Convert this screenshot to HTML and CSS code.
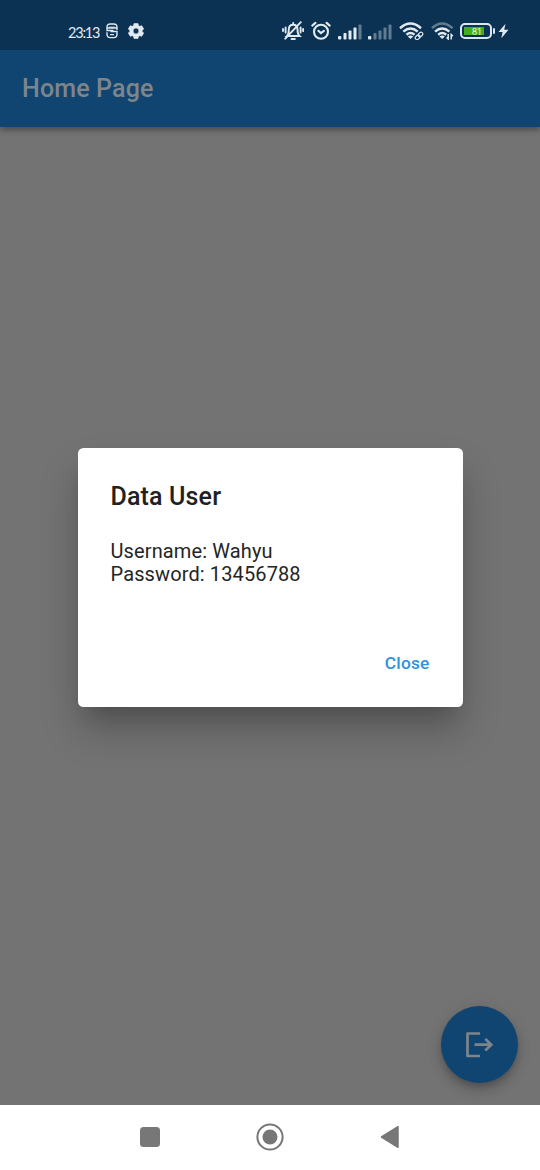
FILE: index.html
```html
<!DOCTYPE html>
<html lang="en">
<head>
<meta charset="utf-8">
<title>Home Page</title>
<link rel="stylesheet" href="styles.css">
</head>
<body>
<div class="screen">
  <header class="status">
    <span class="clock">23:13</span>
    <svg class="i-app" width="12" height="16" viewBox="0 0 12 16" fill="none" stroke="currentColor" stroke-width="1.400"><path d="M11 6.900V4.300C11 2.200 9.800 1 7.700 1H4.300C2.200 1 1 2.200 1 4.300v3.200h6.500M4.500 8.500H11v2.800c0 2.100-1.200 3.300-3.300 3.300H4.300c-2.100 0-3.300-1.200-3.300-3.300V9.200M1.500 5h9M4 3.400v1.600M6 3.400v1.600M8 3.400v1.600M4 11.600h4"/></svg>
    <svg class="i-gear" width="16" height="16" viewBox="0 0 16 16"><path fill="currentColor" stroke="currentColor" stroke-width=".6" stroke-linejoin="round" fill-rule="evenodd" d="M6 .5h4l.5 2.100 1.200.700 2.100-.600 1.900 3.300L14.200 7.400v1.200l1.500 1.400-1.900 3.300-2.100-.600-1.200.700L10 15.500H6l-.5-2.100-1.200-.700-2.100.600L.3 10l1.500-1.400V7.400L.3 6l1.900-3.300 2.100.600 1.200-.700zM8 5.100a2.900 2.900 0 1 0 0 5.800 2.900 2.900 0 0 0 0-5.800z"/></svg>
    <div class="tray">
      <svg class="i-bell" width="22" height="20" viewBox="0 0 22 20" fill="none" stroke="currentColor" stroke-width="1.900" stroke-linecap="round"><path d="M5 15h12.500c-1.700-1.500-2-2.500-2-6.300 0-2.900-1.700-4.900-4.300-4.900S6.800 5.800 6.800 8.700c0 3.800-.2 4.900-1.800 6.300zM11.200 3.500V2M9.500 18h3.400M18.800 1.200 3.300 17.700M3.600 6.500v5M1 8v2M18.600 6.500v5M21.100 8v2"/></svg>
      <svg class="i-alarm" width="20" height="20" viewBox="0 0 20 20" fill="none" stroke="currentColor" stroke-width="2.100" stroke-linecap="round"><circle cx="10" cy="10.800" r="7"/><path d="M1.300 4.600 4.400 1.900M18.700 4.600l-3.100-2.700M7.400 9.800l2.500 2.300 3-2.300"/></svg>
      <svg class="i-signal" width="24" height="16" viewBox="0 0 24 16" fill="currentColor"><rect y="12" width="3.300" height="3.500" rx="1"/><rect x="5.500" y="9" width="3" height="6.500" rx=".8"/><rect x="10.500" y="6.500" width="3" height="9" rx=".8"/><rect x="15.500" y="3.500" width="3" height="12" rx=".8"/><rect class="dim" x="20.500" y=".5" width="3" height="15" rx=".8"/></svg>
      <svg class="i-signal2" width="24" height="16" viewBox="0 0 24 16" fill="currentColor"><rect y="12" width="3.300" height="3.500" rx="1"/><g class="dim"><rect x="5.500" y="9" width="3" height="6.500" rx=".8"/><rect x="10.500" y="6.500" width="3" height="9" rx=".8"/><rect x="15.500" y="3.500" width="3" height="12" rx=".8"/><rect x="20.500" y=".5" width="3" height="15" rx=".8"/></g></svg>
      <svg class="i-wifi" width="26" height="18" viewBox="0 0 26 18" fill="none" stroke="currentColor" stroke-width="2.500"><path d="M1 6.200Q11.500-3.200 22 6.200M4.300 9.600q7.200-6.200 14.400 0M7.500 12.700q4-3.300 8 0"/><path fill="currentColor" stroke="none" d="m11.500 17-2.700-2.600q2.700-1.800 5.400 0z"/><g stroke-width="1.200" transform="rotate(-45 20 14)"><rect x="15.500" y="12.200" width="5.200" height="3.600" rx="1.800"/><rect x="19.500" y="12.200" width="5.200" height="3.600" rx="1.800"/></g></svg>
      <svg class="i-wifi2" width="24" height="18" viewBox="0 0 24 18" fill="none" stroke="currentColor" stroke-width="2.500"><path class="dim" d="M1 6.200q10-9.400 20.500 0"/><path d="M4 9.600q7.200-6.200 14.400 0M7.200 12.700q4-3.300 8 0"/><path fill="currentColor" stroke="none" d="m11.200 17-2.700-2.600q2.700-1.800 5.400 0z"/><path stroke-width="1.500" d="M17.200 12v5l-1.600-1.600M20.200 17.500v-5l1.600 1.600"/></svg>
      <div class="battery"><div class="charge">81</div></div>
      <svg class="i-bolt" width="11" height="16" viewBox="0 0 11 16"><path fill="currentColor" d="M7.500.700.500 9h4.100L3.300 15.300 10.500 6.700H6.200z"/></svg>
    </div>
  </header>
  <div class="appbar">Home Page</div>
  <main class="body">
    <section class="dialog">
      <h2 class="title">Data User</h2>
      <p class="content">Username: Wahyu<br>Password: 13456788</p>
      <button class="close">Close</button>
    </section>
    <div class="fab">
      <svg width="30" height="28" viewBox="0 0 30 28" fill="none" stroke="currentColor" stroke-width="2.700"><path stroke-linejoin="round" d="M15 2.500H2.500v22.500H15"/><path d="M9.500 13.700h17M20.300 7.900l6 5.800-6 5.800"/></svg>
    </div>
  </main>
  <nav class="nav">
    <svg width="20" height="20" viewBox="0 0 20 20"><rect width="20" height="20" rx="3.500" fill="currentColor"/></svg>
    <svg width="28" height="28" viewBox="0 0 28 28"><circle cx="14" cy="14" r="12.600" fill="none" stroke="currentColor" stroke-width="2"/><circle cx="14" cy="14" r="7.500" fill="currentColor"/></svg>
    <svg width="20" height="24" viewBox="0 0 20 24"><path d="M1.500 12 18 1.700v20.600z" fill="currentColor" stroke="currentColor" stroke-width="1.500" stroke-linejoin="round"/></svg>
  </nav>
</div>
</body>
</html>
```
FILE: styles.css
```css
* { box-sizing: border-box; }
body { margin: 0; font-family: Roboto, sans-serif; }
.screen { width: 540px; height: 1170px; display: flex; flex-direction: column; background: #737373; overflow: hidden; }
.status { height: 50px; flex: none; padding: 12px 31px 0 68px; display: flex; align-items: center; background: #0b3252; color: #e1eaf1; position: relative; z-index: 3; }
.status svg { display: block; flex: none; }
.clock { width: 31px; font: 14.500px/20px Lato, sans-serif; letter-spacing: -1.200px; white-space: nowrap; margin-top: 3px; }
.i-app { margin-left: 7px; }
.i-gear { margin-left: 10px; }
.tray { margin-left: auto; display: flex; align-items: center; }
.dim { opacity: .4; }
.i-alarm { margin-left: 7px; }
.i-signal { margin-left: 7px; position: relative; top: 1px; }
.i-signal2 { margin-left: 6px; position: relative; top: 1px; }
.i-wifi { margin-left: 7px; }
.i-wifi2 { margin-left: 6px; }
.battery { width: 32px; height: 16px; margin-left: 5px; padding: 2px; border: 2px solid #dce6ee; border-radius: 5px; position: relative; }
.battery::after { content: ""; position: absolute; right: -5px; top: 3px; width: 2px; height: 6px; background: #dce6ee; border-radius: 1px; }
.charge { width: 20px; height: 8px; background: #42ad1d; color: #e9f5e5; font: 9px/9px Inter, sans-serif; text-align: right; padding-right: 3px; }
.i-bolt { margin-left: 6px; }
.appbar { height: 77px; flex: none; padding-left: 22px; background: #104571; color: #7d858c; font-size: 25px; font-weight: 500; letter-spacing: .15px; line-height: 78px; box-shadow: 0 3px 6px rgba(0,0,0,.35); position: relative; z-index: 2; }
.body { flex: 1; display: flex; flex-direction: column; align-items: center; justify-content: space-between; padding: 321px 22px 22px; }
.dialog { width: 385px; height: 259px; padding: 34px 33px 33px; border-radius: 5.500px; background: #fff; box-shadow: 0 15px 21px -10px rgba(0,0,0,.16), 0 24px 40px -2px rgba(0,0,0,.24); display: flex; flex-direction: column; }
.title { margin: 0; font-size: 25px; font-weight: 500; letter-spacing: .15px; line-height: 30px; color: #212121; }
.content { margin: 28px 0 0; font-size: 20px; letter-spacing: .12px; line-height: 23px; color: #252525; }
.close { align-self: flex-end; margin-top: 65px; padding: 0; border: 0; background: none; color: #2f91df; font: 500 17.300px/24px Roboto, sans-serif; letter-spacing: .2px; }
.fab { align-self: flex-end; width: 77px; height: 77px; border-radius: 50%; background: #104571; color: #7d858c; display: flex; align-items: center; justify-content: center; box-shadow: 0 4px 7px -1px rgba(0,0,0,.2), 0 8px 14px rgba(0,0,0,.14), 0 1px 20px rgba(0,0,0,.05); }
.nav { height: 65px; flex: none; background: #fff; color: #777; display: flex; align-items: center; justify-content: space-between; padding: 0 140px 1px; position: relative; z-index: 1; }
```
